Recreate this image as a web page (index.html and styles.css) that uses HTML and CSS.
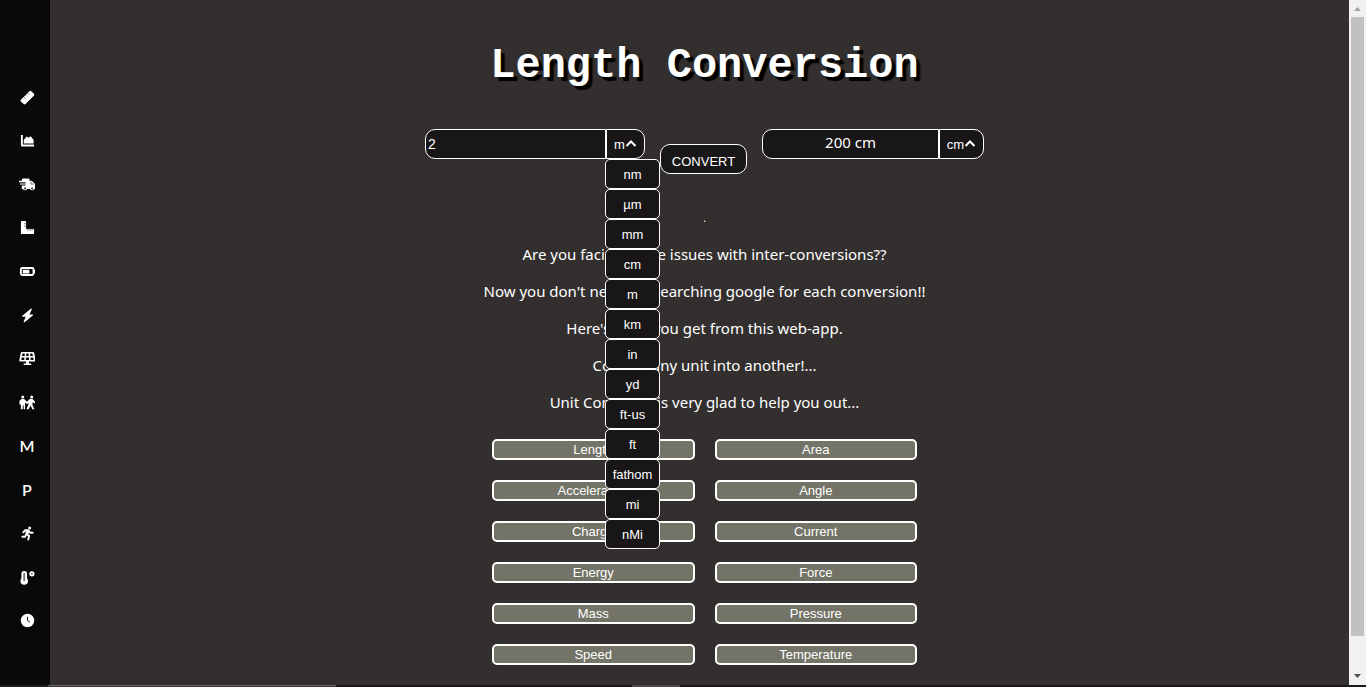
FILE: index.html
```html
<!DOCTYPE html>
<html lang="en">
<head>
<meta charset="utf-8">
<title>Length Conversion</title>
<link rel="stylesheet" href="styles.css">
</head>
<body>
<div class="shell">
  <div class="page">
    <nav class="sidebar">
      <a href="#length" aria-label="Length"><svg viewBox="0 0 16 16"><path d="M.9 10.300 10 1.200a1.400 1.400 0 0 1 2 0l2.800 2.800a1.400 1.400 0 0 1 0 2L5.900 14.900a1.400 1.400 0 0 1-2 0L.9 12.200a1.400 1.400 0 0 1 0-1.900Z"/><path class="cut fine" d="m4.200 7.500 1.500 1.500M6.200 5.500l1.500 1.500M8.200 3.500l1.500 1.500"/></svg></a>
      <a href="#area" aria-label="Area"><svg viewBox="0 0 16 16"><path d="M1 2h2v10.300h12v2H2.200Q1 14.300 1 13Z"/><path d="M4 11.300V7.500L7 3.800l2 1.200 2.500-1.500 3 4v3.800Z"/></svg></a>
      <a href="#acceleration" aria-label="Acceleration"><svg viewBox="0 0 18 16"><path d="M3 3q0-1.500 1.500-1.500H10q1.200 0 1.200 1.200V4h1.900q.6 0 1 .4l2.500 2.500q.4.400.4 1V11h.6v1.700h-1.300a2.500 2.500 0 0 1-4.600 0H8.800a2.500 2.500 0 0 1-4.600 0H3V9h4V8H1V6.800h6V5.500H0V4h3Z"/><path class="cut fine" d="M12.800 5v2.500h2.700"/><circle class="hole" cx="6.500" cy="12.300" r="1"/><circle class="hole" cx="14" cy="12.300" r="1"/></svg></a>
      <a href="#angle" aria-label="Angle"><svg viewBox="0 0 16 16"><path d="M1 2q0-1 1-1h3.500q1 0 1 1v7.500H14q1 0 1 1V14q0 1-1 1H2q-1 0-1-1Z"/><path class="cut fine" d="M4.500 4h2M4.500 6.500h2M8.500 9v2.500M10.700 9v2.500M12.900 9v2.500"/></svg></a>
      <a href="#charge" aria-label="Charge"><svg viewBox="0 0 18 16"><rect class="line" x="2" y="4.300" width="13.500" height="7.400" rx="1.500"/><path d="M4 6h7v4H4ZM16 6.300h1.500v3.400H16Z"/></svg></a>
      <a href="#current" aria-label="Current"><svg viewBox="0 0 16 16"><path d="m11.800.6-9.300 7.600q-.7.700.2 1h3.500L3.900 14.500q-.2 1.100.9.700l8.900-7.300q.6-.8-.2-1.100H10l2.600-5.200q.2-1-.8-1Z"/></svg></a>
      <a href="#energy" aria-label="Energy"><svg viewBox="0 0 18 16"><path d="M3 1h12q1 0 1.200 1l1.500 8q.1 1.300-1.200 1.300h-6v1.900H13V15H5v-1.800h2.500v-1.900h-6Q.2 11.300.3 10l1.500-8Q2 1 3 1Z"/><path class="hole" d="M3.700 2.700h2.500L6 5.200H3.200ZM7.800 2.700h2.400l.2 2.500H7.600ZM11.800 2.700h2.500l.5 2.500H12ZM2.900 6.800h2.900l-.2 2.700H2.400ZM7.500 6.800h3l.2 2.700H7.300ZM12.200 6.800h2.900l.5 2.700h-3.200Z"/></svg></a>
      <a href="#force" aria-label="Force"><svg viewBox="0 0 18 16"><circle cx="4" cy="2.200" r="1.600"/><circle cx="13.500" cy="2.200" r="1.600"/><path d="M2.500 4.300h3l3 3 2.800-3h3.200l3 3.500-1.200 1.200-1.600-1.500-.5 3 2.300 4.700h-2.200l-2-4-2 4H8l2.500-6.500-2 1L6.500 8v7.200H5v-4H4v4H2v-5H.5V6.500Z"/></svg></a>
      <a class="letter" href="#mass">M</a>
      <a class="letter" href="#pressure">P</a>
      <a href="#speed" aria-label="Speed"><svg viewBox="0 0 16 16"><circle cx="10.300" cy="2" r="1.600"/><path class="run" d="M3.500 6.700 5.500 4.500H9L11 7.200h2.500M8.500 5 7 8.800l2.800 1.700-1 4M6.600 9 5.400 11.500H2.500"/><path d="m6 5 4 .5-1.500 4L6 8.500Z"/></svg></a>
      <a href="#temperature" aria-label="Temperature"><svg viewBox="0 0 16 16"><path d="M1.500 4a3 3 0 0 1 6 0v5q1.200 1.200 1 2.700a4 4 0 0 1-8 0Q.3 10.200 1.500 9Z"/><path class="tube" d="M4.500 4v7"/><circle class="line" cx="12.700" cy="4" r="1.800"/></svg></a>
      <a href="#time" aria-label="Time"><svg viewBox="0 0 16 16"><circle cx="8" cy="8" r="7.200"/><path class="cut" d="M8 4v4l2.600 1.800"/></svg></a>
    </nav>
    <main class="content">
      <h1 class="title">Length Conversion</h1>
      <form class="converter">
        <div class="field">
          <input class="amount" type="text" value="2" aria-label="Amount">
          <div class="picker">
            <button class="unit" type="button" aria-expanded="true">m<svg class="caret" viewBox="0 0 12 12"><path d="m1.500 8 4.500-4.500 4.500 4.500"/></svg></button>
            <div class="menu">
              <button type="button">nm</button>
              <button type="button">µm</button>
              <button type="button">mm</button>
              <button type="button">cm</button>
              <button type="button">m</button>
              <button type="button">km</button>
              <button type="button">in</button>
              <button type="button">yd</button>
              <button type="button">ft-us</button>
              <button type="button">ft</button>
              <button type="button">fathom</button>
              <button type="button">mi</button>
              <button type="button">nMi</button>
            </div>
          </div>
        </div>
        <button class="convert" type="button">CONVERT</button>
        <div class="field">
          <output class="result">200 cm</output>
          <button class="unit wide" type="button">cm<svg class="caret" viewBox="0 0 12 12"><path d="m1.500 8 4.500-4.500 4.500 4.500"/></svg></button>
        </div>
      </form>
      <section class="intro">
        <p class="dot">.</p>
        <p>Are you facing some issues with inter-conversions??</p>
        <p>Now you don't need for searching google for each conversion!!</p>
        <p>Here's what you get from this web-app.</p>
        <p>Convert any unit into another!...</p>
        <p>Unit Converter is very glad to help you out...</p>
      </section>
      <div class="topics">
        <button type="button">Length</button><button type="button">Area</button>
        <button type="button">Acceleration</button><button type="button">Angle</button>
        <button type="button">Charge</button><button type="button">Current</button>
        <button type="button">Energy</button><button type="button">Force</button>
        <button type="button">Mass</button><button type="button">Pressure</button>
        <button type="button">Speed</button><button type="button">Temperature</button>
      </div>
    </main>
    <div class="scrollbar">
      <svg class="arrow up" viewBox="0 0 7 4"><path d="M0 4h7L3.500 0Z"/></svg>
      <div class="thumb"></div>
      <svg class="arrow" viewBox="0 0 7 4"><path d="M0 0h7L3.500 4Z"/></svg>
    </div>
  </div>
  <div class="taskbar"><span class="task"></span><span class="active"></span></div>
</div>
</body>
</html>
```
FILE: styles.css
```css
* { box-sizing: border-box; }
body {
  margin: 0;
  background: #332f2e;
  color: #fff;
  font: 15px/21px "Noto Sans", "Open Sans", sans-serif;
}
button, input {
  margin: 0;
  padding: 0;
  color: #fff;
  font: 13px/15px "Liberation Sans", Arial, sans-serif;
}
.shell { display: flex; flex-direction: column; min-height: 100vh; }
.page { display: flex; flex: 1; }

.sidebar {
  display: flex;
  flex-direction: column;
  justify-content: space-between;
  align-items: center;
  width: 50px;
  padding: 88px 0 55px 4px;
  background: #090909;
}
.sidebar a {
  display: flex;
  align-items: center;
  justify-content: center;
  width: 18px;
  height: 18px;
  color: #fff;
  text-decoration: none;
}
.sidebar svg { height: 15px; fill: #fff; }
.sidebar .letter { font: 600 16px/18px Lato, sans-serif; }
.sidebar .cut { fill: none; stroke: #090909; stroke-width: 1; }
.sidebar .fine { stroke: #666; }
.sidebar .hole { fill: #090909; }
.sidebar .line { fill: none; stroke: #fff; stroke-width: 2; }
.sidebar .tube { fill: none; stroke: #777; stroke-width: 2; stroke-linecap: round; }
.sidebar .run { fill: none; stroke: #fff; stroke-width: 2; stroke-linecap: round; stroke-linejoin: round; }

.content {
  display: flex;
  flex: 1;
  flex-direction: column;
  align-items: center;
  padding: 42px 0 20px 10px;
}
.title {
  margin: 0 0 39px;
  font: bold 42px/48px "Courier New", "Liberation Mono", monospace;
  text-shadow: 4px 4px 1px #000;
}
.converter { display: flex; align-items: flex-start; gap: 15px; }
.field { display: flex; }
.amount, .result, .unit, .convert, .menu button {
  height: 30px;
  border: 1px solid #fff;
  background: #181617;
}
.amount {
  width: 181px;
  padding: 0 2px;
  border-radius: 10px 0 0 10px;
  font-size: 14px;
}
.result {
  width: 177px;
  padding-top: 2px;
  border-radius: 10px 0 0 10px;
  text-align: center;
}
.picker { position: relative; }
.unit {
  display: flex;
  align-items: center;
  justify-content: center;
  width: 39px;
  border-radius: 0 10px 10px 0;
}
.wide { width: 45px; }
.caret { width: 12px; fill: none; stroke: #fff; stroke-width: 2; }
.convert {
  width: 87px;
  margin-top: 15px;
  padding-top: 4px;
  border-radius: 10px;
}
.menu {
  position: absolute;
  top: 100%;
  left: -1px;
  display: flex;
  flex-direction: column;
  width: 55px;
}
.menu button { border-radius: 5px; }

.intro { padding-top: 34px; text-align: center; }
.intro p { margin: 0 0 16px; }
.intro .dot { font-size: 10px; line-height: 20px; }
.topics {
  display: grid;
  grid-template-columns: 1fr 1fr;
  gap: 20px;
  width: 425px;
  padding-top: 10px;
}
.topics button {
  height: 21px;
  border: 2px solid #fff;
  border-radius: 5px;
  background: #737467;
}

.scrollbar {
  display: flex;
  flex-direction: column;
  align-items: center;
  width: 17px;
  padding: 7px 0;
  background: #f1f1f1;
}
.thumb { width: 13px; height: 619px; margin: 6px 0 auto; background: #c1c1c1; }
.arrow { width: 7px; height: 4px; fill: #505050; }
.up { fill: #a3a3a3; }
.taskbar { display: flex; height: 2px; padding-left: 48px; background: #1c191b; }
.task { width: 288px; margin-right: 296px; border-top: 1px solid #666; background: #333; }
.active { width: 48px; background: #4b494a; }
```
